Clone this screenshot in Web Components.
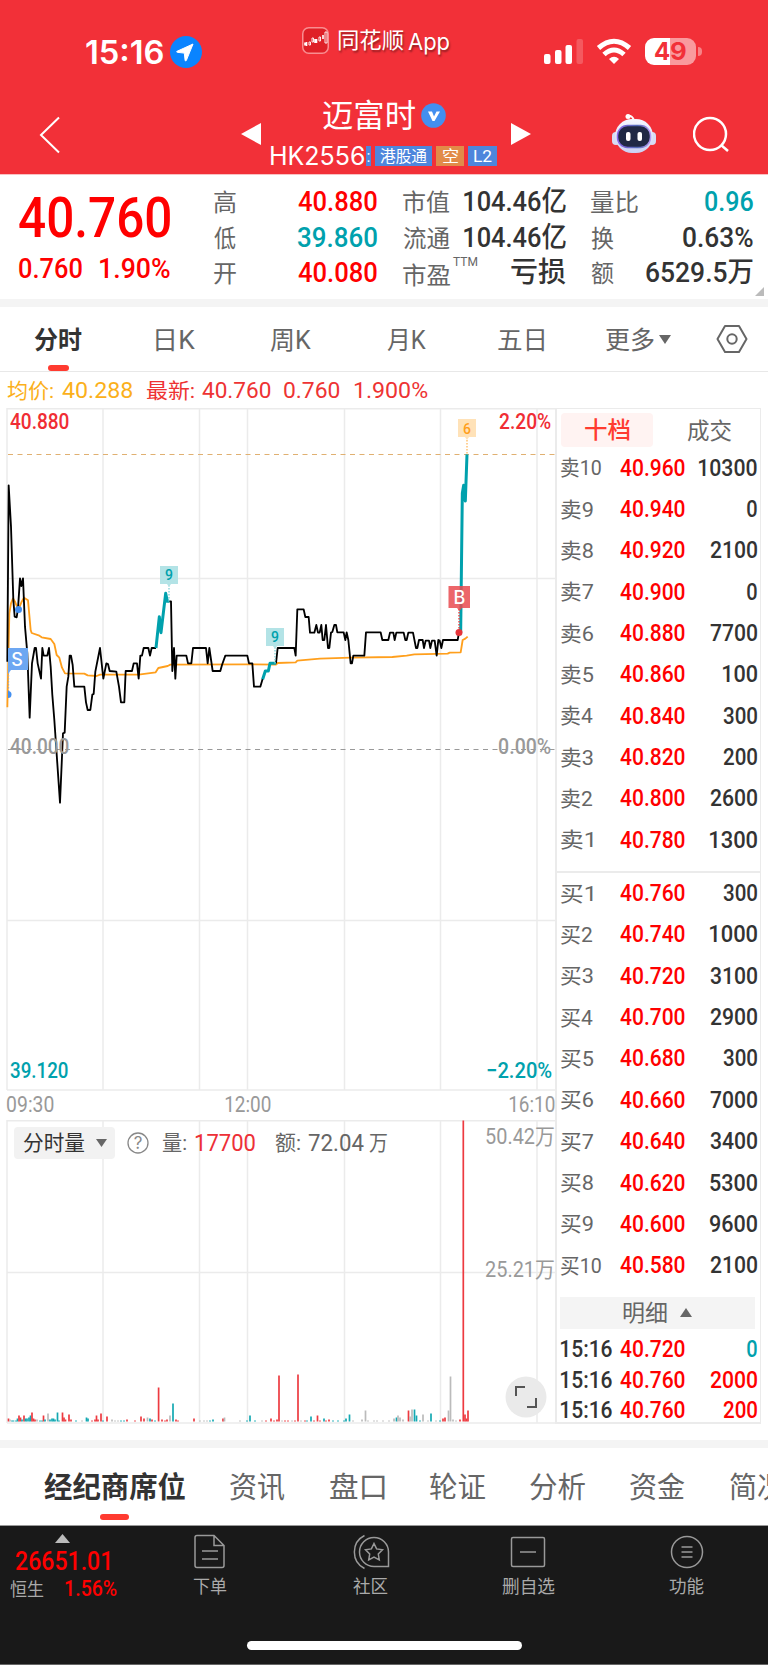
<!DOCTYPE html>
<html lang="zh-CN">
<head>
<meta charset="utf-8">
<meta name="viewport" content="width=device-width">
<title>迈富时 HK2556</title>
<style>
  body {
    margin: 0;
    width: 768px;
    height: 1665px;
    overflow: hidden;
    background: #fff;
    color: #666;
    font-family: Roboto, "Noto Sans CJK SC", sans-serif;
  }
</style>
</head>
<body>
<stock-page></stock-page>

<script>
const define = (tag, css, html, setup = () => {}) => {
  const template = document.createElement("template");
  template.innerHTML = `<style>:host{display:block;box-sizing:border-box}*{box-sizing:border-box}svg{display:block}${css}</style>${html}`;
  customElements.define(
    tag,
    class extends HTMLElement {
      connectedCallback() {
        if (this.shadowRoot) return;
        const root = this.attachShadow({ mode: "open" });
        root.append(template.content.cloneNode(true));
        setup(root, this);
      }
    }
  );
};

// <fit-text s="size" w="ink width">: a line squeezed or stretched to an exact width
const pen = document.createElement("canvas").getContext("2d");
define(
  "fit-text",
  `:host{flex:none;white-space:nowrap;line-height:1}
   span{display:inline-block;vertical-align:top;transform-origin:0 0}`,
  `<span><slot></slot></span>`,
  (root, host) => {
    const size = host.getAttribute("s");
    const width = Number(host.getAttribute("w"));
    host.style.fontSize = `${size}px`;
    host.style.height = `${size}px`;
    host.style.width = `${width}px`;
    if (host.hasAttribute("b")) host.style.fontWeight = host.getAttribute("b");
    if (host.hasAttribute("c")) host.style.color = host.getAttribute("c");
    const style = getComputedStyle(host);
    pen.font = `${style.fontWeight} ${size}px ${style.fontFamily}`;
    const ink = pen.measureText(host.textContent.trim());
    const scale = width / (ink.actualBoundingBoxLeft + ink.actualBoundingBoxRight);
    root.querySelector("span").style.transform =
      `scaleX(${scale}) translateX(${ink.actualBoundingBoxLeft}px)`;
  }
);

define(
  "status-bar",
  `:host{height:85px;background:#f23038;color:#fff;display:flex;align-items:flex-start}
   .time{margin:37px 0 0 86px;font-family:Inter,sans-serif}
   .loc{margin:36px 0 0 7px}
   .app{margin:27px 0 0 100px}
   .name{margin:30px 0 0 9px;text-shadow:1px 2px 2px #0006;display:flex;gap:5px}
   .signal{margin:39px 0 0 95px}
   .wifi{margin:38px 0 0 12px}
   .battery{margin:38px 0 0 13px;width:51px;height:27px;border-radius:9px;background:linear-gradient(90deg,#fff 25px,#f99a9d 25px);padding:2px 0 0 10px;font-family:Inter,sans-serif}
   .digits{display:flex;gap:1px;color:#f23038}
   .nub{width:4px;height:9px;margin:47px 0 0 2px;background:#f78286;border-radius:0 4px 4px 0}`,
  `<fit-text class="time" s="32" w="77" b="600">15:16</fit-text>
   <svg class="loc" width="32" height="32" viewBox="0 0 32 32"><circle cx="16" cy="16" r="16" fill="#0a84ff"/><path d="M23 8 7 15.3q-1 .7.3 1l7 .8.8 7.2q.5 1.3 1.2.2Z" fill="#fff" stroke="#fff" stroke-linejoin="round"/></svg>
   <svg class="app" width="27" height="27" viewBox="0 0 27 27"><rect x=".75" y=".75" width="25.5" height="25.5" rx="6" fill="#df2027" stroke="#f98d90" stroke-width="1.5"/><path d="M3 15.500v3M4.500 15v4M13 12v4M14.500 12v4M21 8v4" stroke="#fff" stroke-width="1.600"/><path d="M7 15h1.500v3H7zm3-4h1.500v4H10zm7-1h1.500v4H17zm6-5h2v11h-2z" fill="none" stroke="#fff" stroke-width=".9"/></svg>
   <div class="name"><fit-text s="22" w="65">同花顺</fit-text><fit-text s="23" w="41" style="font-family:Inter;margin-top:1px">App</fit-text></div>
   <svg class="signal" width="40" height="27" viewBox="0 0 40 27" fill="#fff"><rect y="15" width="6.500" height="10" rx="2"/><rect x="11" y="11" width="6.500" height="14" rx="2"/><rect x="21.500" y="6" width="6.500" height="19" rx="2"/><rect x="32.500" width="6.500" height="25" rx="2" opacity=".2"/></svg>
   <svg class="wifi" width="36" height="27" viewBox="0 0 36 27" fill="none" stroke="#fff" stroke-width="5"><path d="M2.500 10Q18-3.500 33.500 10M8 16.500q10-9 20 0"/><path d="m18 26-5-5q5-4.500 10 0Z" fill="#fff" stroke="none"/></svg>
   <div class="battery"><div class="digits"><fit-text s="24" w="15" b="700">4</fit-text><fit-text s="24" w="15" b="700">9</fit-text></div></div>
   <div class="nub"></div>`
);

define(
  "title-bar",
  `:host{height:90px;background:#f23038;color:#fff;display:flex;align-items:flex-start;border-bottom:1px solid #fac0c2}
   .back{margin:31px 0 0 39px}
   .prev{margin:38px 0 0 180px}
   .center{width:226px;margin:13px 0 0 10px}
   .title{display:flex;margin-left:52px;gap:6px;height:47px}
   .title svg{margin-top:5px}
   .code{display:flex;align-items:center;height:22px}
   .code b{display:flex;align-items:center;justify-content:center;height:20px;font-weight:400;background:#4e86dc;margin-left:4px;flex:none}
   .code .cut{width:5px;margin-left:2px;overflow:hidden}
   .code b fit-text{margin-top:1px}
   .next{margin:38px 0 0 14px}
   .robot{margin:28px 0 0 81px}
   .search{margin:31px 0 0 37px}`,
  `<svg class="back" width="22" height="38" viewBox="0 0 22 38" fill="none" stroke="#fff" stroke-width="2"><path d="M20 1.500 2 19l18 17.500"/></svg>
   <svg class="prev" width="20" height="22"><path d="M20 0v22L0 11z" fill="#fff"/></svg>
   <div class="center">
     <div class="title"><fit-text s="32" w="92" style="margin-top:2px">迈富时</fit-text>
       <svg width="25" height="25" viewBox="0 0 25 25"><circle cx="12.500" cy="12.500" r="12.300" fill="#438ff0"/><path d="M7 8.500h4l2 5 2.500-5H19L13.500 18h-2z" fill="#fff"/></svg></div>
     <div class="code"><fit-text s="25" w="93" style="font-family:Inter;font-weight:400">HK2556</fit-text><b class="cut"><fit-text s="16" w="2">:</fit-text></b><b style="width:57px"><fit-text s="16" w="47">港股通</fit-text></b><b style="width:28px;background:#e28b48"><fit-text s="16" w="15">空</fit-text></b><b style="width:29px"><fit-text s="16" w="18">L2</fit-text></b></div>
   </div>
   <svg class="next" width="20" height="22"><path d="M0 0v22l20-11z" fill="#fff"/></svg>
   <svg class="robot" width="44" height="41" viewBox="0 0 44 41"><defs><linearGradient id="shell" x2="0" y2="1"><stop stop-color="#f6f7ff"/><stop offset="1" stop-color="#cbd1f3"/></linearGradient><linearGradient id="rim"><stop stop-color="#8b67e8"/><stop offset=".6" stop-color="#5269b4"/><stop offset="1" stop-color="#b69af4"/></linearGradient></defs><path d="M15 3q6-1 7 5" fill="none" stroke="#fff" stroke-width="2"/><circle cx="16" cy="3.500" r="2.500" fill="#fff"/><rect y="19" width="8" height="13" rx="4" fill="#d7dcf5"/><rect x="36" y="19" width="8" height="13" rx="4" fill="#d7dcf5"/><rect x="3" y="6" width="38" height="34" rx="17" fill="url(#shell)"/><rect x="5.500" y="12.500" width="33" height="22" rx="10" fill="#202844" stroke="url(#rim)" stroke-width="1.500"/><rect x="14" y="19" width="4.500" height="9" rx="2" fill="#fff"/><rect x="25.500" y="19" width="4.500" height="9" rx="2" fill="#fff"/></svg>
   <svg class="search" width="38" height="38" viewBox="0 0 38 38" fill="none" stroke="#fff" stroke-width="2.500"><circle cx="17" cy="18" r="16"/><path d="m28 29 7 6"/></svg>`
);

define(
  "quote-panel",
  `:host{height:132px;border-bottom:8px solid #f4f4f4;background:#fff;display:grid;grid-template-columns:195px 163px 26px 163px 25px 162px;position:relative;color:#666;padding-left:19px}
   .last{padding-top:15px}
   .change{display:flex;gap:18px;margin-top:9px}
   .col{padding-top:9px}
   .row{height:35.800px;display:flex;justify-content:space-between;align-items:center}
   sup{font-size:12px;line-height:12px;margin:-22px auto 0 3px}
   .corner{position:absolute;right:4px;bottom:3px}`,
  `<div class="last"><fit-text s="56" w="151" b="500" c="#f00">40.760</fit-text>
     <div class="change"><fit-text s="28" w="63" b="500" c="#f00">0.760</fit-text><fit-text s="28" w="70" b="500" c="#f00">1.90%</fit-text></div></div>
   <div class="col">
     <div class="row"><fit-text s="24" w="22" style="margin-top:2px">高</fit-text><fit-text s="28" w="79" b="500" c="#f00">40.880</fit-text></div>
     <div class="row"><fit-text s="24" w="22" style="margin-top:2px">低</fit-text><fit-text s="28" w="79" b="500" c="#00a1ad">39.860</fit-text></div>
     <div class="row"><fit-text s="24" w="22" style="margin-top:2px">开</fit-text><fit-text s="28" w="79" b="500" c="#f00">40.080</fit-text></div>
   </div><i></i>
   <div class="col">
     <div class="row"><fit-text s="24" w="46" style="margin-top:2px">市值</fit-text><fit-text s="28" w="102" b="500" c="#333">104.46亿</fit-text></div>
     <div class="row"><fit-text s="24" w="47" style="margin-top:2px">流通</fit-text><fit-text s="28" w="102" b="500" c="#333">104.46亿</fit-text></div>
     <div class="row"><fit-text s="24" w="47" style="margin-top:5px">市盈</fit-text><sup>TTM</sup><fit-text s="28" w="55" b="500" c="#333">亏损</fit-text></div>
   </div><i></i>
   <div class="col">
     <div class="row"><fit-text s="24" w="47" style="margin-top:2px">量比</fit-text><fit-text s="28" w="48" b="500" c="#00a1ad">0.96</fit-text></div>
     <div class="row"><fit-text s="24" w="23" style="margin-top:2px">换</fit-text><fit-text s="28" w="70" b="500" c="#333">0.63%</fit-text></div>
     <div class="row"><fit-text s="24" w="23" style="margin-top:2px">额</fit-text><fit-text s="28" w="107" b="500" c="#333">6529.5万</fit-text></div>
   </div>
   <svg class="corner" width="9" height="9"><path d="M9 0v9H0z" fill="#bbb"/></svg>`
);

define(
  "period-tabs",
  `:host{height:65px;display:flex;align-items:center;border-bottom:1px solid #e8e8e8;padding-left:34px;position:relative}
   :host::after{content:"";position:absolute;left:48px;bottom:0;width:21px;height:6px;border-radius:3px;background:#ff3b30}
   fit-text{margin:2px var(--gap) 0 0}`,
  `<fit-text s="25" w="48" b="600" c="#333" style="--gap:74px">分时</fit-text>
   <fit-text s="25" w="39" style="--gap:75px">日K</fit-text>
   <fit-text s="25" w="41" style="--gap:76px">周K</fit-text>
   <fit-text s="25" w="39" style="--gap:72px">月K</fit-text>
   <fit-text s="25" w="46" style="--gap:62px">五日</fit-text>
   <fit-text s="25" w="48" style="--gap:5px">更多</fit-text>
   <svg width="12" height="9"><path d="M0 0h12L6 9z" fill="#666"/></svg>
   <svg width="32" height="30" viewBox="0 0 32 30" style="margin-left:45px" fill="none" stroke="#666" stroke-width="2"><path d="M9 2h14l7.500 13L23 28H9L1.500 15z" stroke-linejoin="round"/><circle cx="16" cy="15" r="4.700"/></svg>`
);

define(
  "price-info",
  `:host{height:36px;display:flex;align-items:center;padding:2px 0 0 7px;color:#e33}
   fit-text{margin-right:var(--gap)}`,
  `<fit-text s="21" w="46" c="#fbb01b" style="--gap:9px">均价:</fit-text>
   <fit-text s="22" w="71" c="#fbb01b" style="--gap:13px">40.288</fit-text>
   <fit-text s="21" w="48" style="--gap:8px">最新:</fit-text>
   <fit-text s="22" w="69" style="--gap:13px">40.760</fit-text>
   <fit-text s="22" w="56" style="--gap:14px">0.760</fit-text>
   <fit-text s="22" w="74">1.900%</fit-text>`
);

const grid = (top, bottom) =>
  [103, 199.5, 247.5, 344.5, 440.5, 537]
    .map((x) => `<path d="M${x} ${top}V${bottom}"/>`)
    .join("");

define(
  "price-chart",
  `:host{height:683px;position:relative;font-weight:500}
   .label{position:absolute}
   text{font-family:Roboto,sans-serif;text-anchor:middle}
   .mark text{font-family:Inter,sans-serif;font-weight:500}`,
  `<svg width="557" height="683" viewBox="0 408 557 683" fill="none">
     <g stroke="#ebebeb" stroke-width="1.500">${grid(408, 1090)}<path d="M7 408.700H556M7 578.500H556M7 920.500H556M7 1090H556"/><path d="M7 408V1090"/></g>
     <path d="M8 454.500H556" stroke="#e0b071" stroke-dasharray="5 4.500"/>
     <path d="M8 749.500H556" stroke="#999" stroke-dasharray="5 4.500"/>
     <g transform="translate(0 400) scale(.33333)" stroke-width="5.500" stroke-linejoin="round">
       <path stroke="#ff9f1c" d="M22 922 28 640 33 610 39 595 45 605 55 630 65 605 72 593 84 601 92 690 95 699 116 706 125 712 152 717 163 732 170 765 178 773 186 803 195 820 253 821 263 826 290 828 300 824 416 824 467 817 475 804 503 798 511 794 742 793 828 794 833 789 887 787 892 782 960 776 1053 773 1177 771 1220 767 1243 763 1343 761 1349 758 1382 757 1388 720 1396 716 1403 710"/>
       <g stroke="#000">
       <path d="M22 785 26 256 33 380 40 600 44 650 50 652 54 625 60 535 64 558 69 535 75 680 82 760 89 953 96 790 104 744 108 744 113 790 123 836 127 744 131 767 142 767 147 744 152 800 157 885 163 960 180 1208 189 1000 194 998 200 860 205 830 209 767 213 767 218 795 223 860 253 860 258 907 263 930 271 930 277 884 281 882 286 815 300 744 310 836 319 790 324 792 329 813 349 815 357 860 363 907 373 907 377 813 396 813 401 790 411 790 416 836 421 767 426 767 431 744 445 744 450 767 455 744 468 744"/>
       <path d="M506 604 513 604 517 813 522 744 526 836 530 767 559 767 564 790 574 790 579 744 618 744 623 790 628 744 638 813 661 813 666 795 676 767 742 767 747 790 757 790 762 860 781 860 788 836"/>
       <path d="M828 790 833 744 883 744 887 767 892 628 911 628 916 651 926 651 930 698 943 698 949 675 954 698 959 698 964 675 968 720 973 720 978 675 984 744 988 744 993 698 997 696 1003 675 1008 675 1012 697 1031 697 1036 720 1040 697 1045 720 1052 790 1056 790 1060 767 1093 767 1098 697 1142 697 1147 720 1165 720 1170 698 1180 698 1184 720 1189 698 1211 698 1216 720 1220 720 1225 698 1239 698 1248 744 1252 744 1257 720 1268 720 1272 744 1277 722 1287 722 1291 744 1296 722 1304 722 1310 767 1315 720 1319 722 1324 744 1329 720 1373 720 1377 698"/></g>
       <path stroke="#00a1ad" stroke-width="9" d="M468 744 478 650 483 698 497 580 502 604 508 604M788 838 796 813 805 813 810 790 828 790M1382 698 1387 280 1391 256 1396 303 1401 163"/>
     </g>
     <g stroke-width="1.300" stroke-dasharray="1.500 1.500"><path d="M169 585v17M275 647v17" stroke="#7dcfd4"/><path d="M467 440v14" stroke="#ffb85c"/><path d="M459 609v22" stroke="#e33"/><path d="M8.500 672v22" stroke="#aaa"/></g>
     <path d="M160 566h18v18h-7l-2 3-2-3h-7zM266 628h18v18h-7l-2 3-2-3h-7z" fill="#b3e3e6"/><path d="M458 419h18v18h-7l-2 3-2-3h-7z" fill="#ffe2b8"/>
     <path d="M8 648h20v22H11l-3 4z" fill="#6da7f2"/><path d="M448.500 586h21.500v22h-8l-2.500 3-2.500-3h-8.500z" fill="#e94b50" fill-opacity=".85"/>
     <circle cx="18.500" cy="609.500" r="3.500" fill="#438ff0"/><path d="M8 691a3.500 3.500 0 0 1 0 7z" fill="#438ff0"/><circle cx="459" cy="632.500" r="3.500" fill="#e5343a"/>
     <g font-size="14" font-weight="500"><text x="169" y="580" fill="#00a1ad">9</text><text x="275" y="642" fill="#00a1ad">9</text><text x="467" y="433.500" fill="#ff9f1c">6</text></g>
     <g class="mark" font-size="18" fill="#fff"><text x="17" y="665.500">S</text><text x="459.300" y="603.500">B</text></g>
   </svg>
   <fit-text class="label" style="left:10px;top:3px" s="22" w="59" c="#f02d34">40.880</fit-text>
   <fit-text class="label" style="left:499px;top:3px" s="22" w="52" c="#f02d34">2.20%</fit-text>
   <fit-text class="label" style="left:10px;top:328px" s="22" w="59" c="#999">40.000</fit-text>
   <fit-text class="label" style="left:499px;top:328px" s="22" w="52" c="#999">0.00%</fit-text>
   <fit-text class="label" style="left:10px;top:652px" s="22" w="58" c="#00a1ad">39.120</fit-text>
   <fit-text class="label" style="left:487px;top:652px" s="22" w="65" c="#00a1ad">−2.20%</fit-text>`
);

define(
  "time-axis",
  `:host{height:29px;display:flex;padding:3px 0 0 7px;color:#999}`,
  `<fit-text s="22" w="47">09:30</fit-text><fit-text s="22" w="46" style="margin:0 238px 0 171px">12:00</fit-text><fit-text s="22" w="46">16:10</fit-text>`
);

// x, height and colour of each minute's bar
const volumes =
  "8.5,3,r 10,2,g 12,1,t 13.5,1,t 16,1,t 17.5,3,t 19,6,r 20.500,4,r 22,2,t 24,6,r 25.500,3,t 27,3,t 29,4,t 30.500,6,t 32,9,r 33.500,3,r 35,2,r 37,2,g 40,1,t 42,1,t 43.500,6,r 45,2,t 48,8,g 50,2,t 52,3,t 53.500,3,t 55,2,t 57.500,9,t 59,1,t 62.500,9,r 64,4,r 65.500,2,r 69,7,r 71,2,r 76,1,t 82,1,g 86.500,4,t 88,3,t 92,1,r 95,2,r 96.500,6,r 98,2,r 101,8,r 103,1,t 107,5,r 112,2,g 115,1,g 118,1,g 121,1,t 124,1,t 127,2,r 135,1,r 141,5,r 144,3,r 147.500,4,g 150,3,t 152,2,r 155,1,t 158.600,34,r 162,2,r 165,1,r 167,2,r 170,6,g 173,18,t 176,2,r 178,1,r 194,3,r 200,1,g 204,1,g 207,1,g 210,1,t 213,2,t 223,3,r 224.500,4,g 240,1,g 247,1,t 250,6,t 255,1,t 262,1,g 266,1,r 271,3,r 274,1,r 277,2,r 279,46,r 282,1,g 285,1,r 288,1,r 292,1,g 295,1,r 298,47,r 301,1,g 305,1,r 307,1,t 311,5,t 314,1,r 317.500,6,r 320,1,r 324,3,t 326,1,r 329,2,r 333,1,t 338,1,t 344,1,t 346,3,t 349.500,7,t 353,1,g 362,2,g 365.500,11,g 368,1,g 374,1,g 377,1,g 383,1,g 389,1,g 394,3,g 396.500,4,t 398,6,g 400,4,g 403,2,g 408.500,11,r 410,5,g 412,12,g 414.500,12,t 416.500,6,t 420,1,t 423,7,g 428,1,g 431,8,t 436,1,g 440,1,t 443,3,r 445,4,r 448.500,11,g 450.500,45,g 453,2,g 456,1,g 460,2,r 463.300,301,r 465,7,r 466.500,3,r 468,11,r";
const palette = { r: "#ed3a40", t: "#13a8b2", g: "#bbb" };
const bars = volumes
  .split(" ")
  .map((bar) => bar.split(","))
  .map(([x, h, c]) => `<path d="M${x} 1421.500v-${h}" stroke="${palette[c]}"/>`)
  .join("");

define(
  "volume-chart",
  `:host{height:304px;position:relative}
   .head{position:absolute;left:14px;top:7px;height:32px;display:flex;align-items:center}
   .pick{width:101px;height:32px;background:#f2f2f2;border-radius:4px;display:flex;align-items:center;padding:0 8px 0 9px;justify-content:space-between}
   .head fit-text{margin-top:1px}
   .help{margin:0 13px 0 12px}
   .label{position:absolute;left:486px}
   .expand{position:absolute;left:505px;top:256px}
   text{font:17px Inter,sans-serif;text-anchor:middle}`,
  `<svg width="557" height="304" viewBox="0 1120 557 304" fill="none">
     <g stroke="#ebebeb" stroke-width="1.500">${grid(1120, 1423)}<path d="M7 1120.700H556M7 1272.500H556M7 1423H556M7 1120V1423"/></g>
     <g stroke-width="1.700">${bars}</g>
   </svg>
   <div class="head"><div class="pick"><fit-text s="21" w="62" c="#333">分时量</fit-text><svg width="11" height="8"><path d="M0 0h11L5.500 8z" fill="#666"/></svg></div>
     <svg class="help" width="22" height="22" viewBox="0 0 22 22" fill="none"><circle cx="11" cy="11" r="10" stroke="#888" stroke-width="1.300"/><text x="11" y="17" fill="#888">?</text></svg>
     <fit-text s="21" w="24" style="margin-right:9px">量:</fit-text><fit-text s="23" w="60" c="#ed3037" style="margin-right:20px">17700</fit-text><fit-text s="21" w="25" style="margin-right:8px">额:</fit-text><fit-text s="23" w="56" style="margin-right:5px">72.04</fit-text><fit-text s="21" w="18">万</fit-text></div>
   <fit-text class="label" style="top:6px" s="22" w="68" c="#999">50.42万</fit-text>
   <fit-text class="label" style="top:139px" s="22" w="68" c="#999">25.21万</fit-text>
   <svg class="expand" width="42" height="42" viewBox="0 0 42 42"><circle cx="21" cy="21" r="20.500" fill="#eaeaea"/><path d="M11 20v-9h9M31 22v9h-9" fill="none" stroke="#555" stroke-width="2"/></svg>`
);

const level = (name, price, volume, labelWidth, volumeWidth) =>
  `<div class="row"><fit-text s="21" w="${labelWidth}">${name}</fit-text><fit-text s="24" w="65" b="500" c="#f00">${price}</fit-text><fit-text class="v" s="24" w="${volumeWidth}" b="500" c="#333">${volume}</fit-text></div>`;
const side = (label, top, counts) =>
  counts
    .map(([rank, volume]) => {
      const step = label === "卖" ? 10 - rank : rank - 1;
      return level(
        label + rank,
        ((top - step * 2) / 100).toFixed(3),
        volume,
        rank === 10 ? 40 : 32,
        [0, 10, 22, 34.5, 47.5, 58][String(volume).length]
      );
    })
    .join("");
const asks = [[10, 10300], [9, 0], [8, 2100], [7, 0], [6, 7700], [5, 100], [4, 300], [3, 200], [2, 2600], [1, 1300]];
const bids = [[1, 300], [2, 1000], [3, 3100], [4, 2900], [5, 300], [6, 7000], [7, 3400], [8, 5300], [9, 9600], [10, 2100]];

define(
  "order-book",
  `:host{height:1016px;border:solid #ebebeb;border-width:1px 1px 2px 2px;padding-left:4px}
   .tabs{display:flex;padding-top:4px;height:38px}
   .tabs b{width:92px;height:34px;border-radius:4px;background:#fff3f2;color:#ff3b30;display:grid;place-items:center;font-weight:500}
   .tabs b fit-text{margin-top:1px}
   .row{height:41.350px;display:grid;grid-template-columns:59px 65px 1fr;align-items:center;padding-right:3px}
   .row>:first-child{margin-top:2px}
   .v{justify-self:end}
   .bids{border-top:2px solid #ebebeb;margin:11px 0 0 -4px;padding-left:4px}
   .bids .row{position:relative;top:-1px}
   .more{height:32px;width:195px;margin:10px 0 5px -1px;background:#f4f4f4;display:flex;align-items:center;justify-content:center;gap:13px}
   .more fit-text{margin-top:2px}
   .trade .row{height:30.500px}
   .trade .row>:first-child{margin-top:0}`,
  `<div class="tabs"><b><fit-text s="23" w="45">十档</fit-text></b><fit-text s="23" w="45" style="margin:7px 0 0 34px">成交</fit-text></div>
   <div>${side("卖", 4096, asks)}</div>
   <div class="bids">${side("买", 4076, bids)}</div>
   <div class="more"><fit-text s="23" w="44">明细</fit-text><svg width="12" height="9"><path d="M0 9h12L6 0z" fill="#666"/></svg></div>
   <div class="trade">
     <div class="row"><fit-text s="24" w="51" b="500" c="#333">15:16</fit-text><fit-text s="24" w="65" b="500" c="#f00">40.720</fit-text><fit-text class="v" s="24" w="10" b="500" c="#00a1ad">0</fit-text></div>
     <div class="row"><fit-text s="24" w="51" b="500" c="#333">15:16</fit-text><fit-text s="24" w="65" b="500" c="#f00">40.760</fit-text><fit-text class="v" s="24" w="47.5" b="500" c="#f00">2000</fit-text></div>
     <div class="row"><fit-text s="24" w="51" b="500" c="#333">15:16</fit-text><fit-text s="24" w="65" b="500" c="#f00">40.760</fit-text><fit-text class="v" s="24" w="34.5" b="500" c="#f00">200</fit-text></div>
   </div>`
);

define(
  "section-tabs",
  `:host{height:86px;border-top:8px solid #f4f4f4;border-bottom:1px solid #999;display:flex;gap:45px;padding:26px 0 0 44px;overflow:hidden;position:relative}
   :host::after{content:"";position:absolute;left:100px;bottom:5px;width:29px;height:6px;border-radius:3px;background:#ff3b30}`,
  `<fit-text s="29" w="141" b="600" c="#333">经纪商席位</fit-text>
   <fit-text s="29" w="55">资讯</fit-text><fit-text s="29" w="55">盘口</fit-text><fit-text s="29" w="55">轮证</fit-text><fit-text s="29" w="55">分析</fit-text><fit-text s="29" w="55">资金</fit-text><fit-text s="29" w="55">简况</fit-text>`
);

define(
  "nav-item",
  `:host{display:flex;flex-direction:column;align-items:center;padding-top:8px;color:#aaa}
   .icon{height:44px}`,
  `<div class="icon"><slot name="icon"></slot></div><slot></slot>`
);

define(
  "nav-bar",
  `:host{height:139px;background:#191919;display:grid;grid-template-columns:129px 161px 161px 154px 163px;grid-template-rows:115px 9px;color:#aaa;border-bottom:1px solid #666}
   .index{padding-top:8px}
   .index fit-text{flex:none}
   .line{display:flex;gap:21px;padding:4px 0 0 10px;align-items:center}
   .home{grid-column:1/-1;justify-self:center;width:275px;height:9px;border-radius:5px;background:#fff}
   nav-item svg{fill:none;stroke:#999;stroke-width:1.500}`,
  `<div class="index"><svg width="16" height="10" style="margin-left:55px"><path d="M0 9h15L7.500 0z" fill="#bbb"/></svg>
     <fit-text s="26" w="93" b="500" c="#f00" style="margin:4px 0 0 16px">26651.01</fit-text>
     <div class="line"><fit-text s="18" w="34" style="margin-top:2px">恒生</fit-text><fit-text s="22" w="52" b="500" c="#f00">1.56%</fit-text></div></div>
   <nav-item><svg slot="icon" width="32" height="36" viewBox="0 0 32 36"><path d="M3 1.500h17l10 10v20q0 2-2 2H3q-2 0-2-2v-28q0-2 2-2zM20 1.500v10h10M8 17h16M8 25h16"/></svg><fit-text s="18" w="34">下单</fit-text></nav-item>
   <nav-item><svg slot="icon" width="38" height="36" viewBox="0 0 38 36"><path d="M22 3.500a14.500 14.500 0 1 0 0 29h14.500V18A14.500 14.500 0 0 0 22 3.500zM12.500 1.500a18.500 18.500 0 0 0 0 33M22 9.500l2.600 5.400 5.900.9-4.200 4.200 1 6-5.300-2.800-5.300 2.800 1-6-4.200-4.200 5.900-.9z"/></svg><fit-text s="18" w="35">社区</fit-text></nav-item>
   <nav-item><svg slot="icon" width="36" height="36" viewBox="0 0 36 36"><rect x="1.500" y="3.500" width="33" height="29" rx="1.500"/><path d="M10 18h16"/></svg><fit-text s="18" w="53">删自选</fit-text></nav-item>
   <nav-item><svg slot="icon" width="34" height="36" viewBox="0 0 34 36"><circle cx="17" cy="18" r="15.500"/><path d="M11.500 13h11M11.500 18h11M11.500 23h11"/></svg><fit-text s="18" w="35">功能</fit-text></nav-item>
   <div class="home"></div>`
);

define(
  "stock-page",
  `.main{display:grid;grid-template-columns:555px 206px;height:1032px}`,
  `<status-bar></status-bar>
   <title-bar></title-bar>
   <quote-panel></quote-panel>
   <period-tabs></period-tabs>
   <price-info></price-info>
   <div class="main">
     <div><price-chart></price-chart><time-axis></time-axis><volume-chart></volume-chart></div>
     <order-book></order-book>
   </div>
   <section-tabs></section-tabs>
   <nav-bar></nav-bar>`
);
</script>
</body>
</html>
